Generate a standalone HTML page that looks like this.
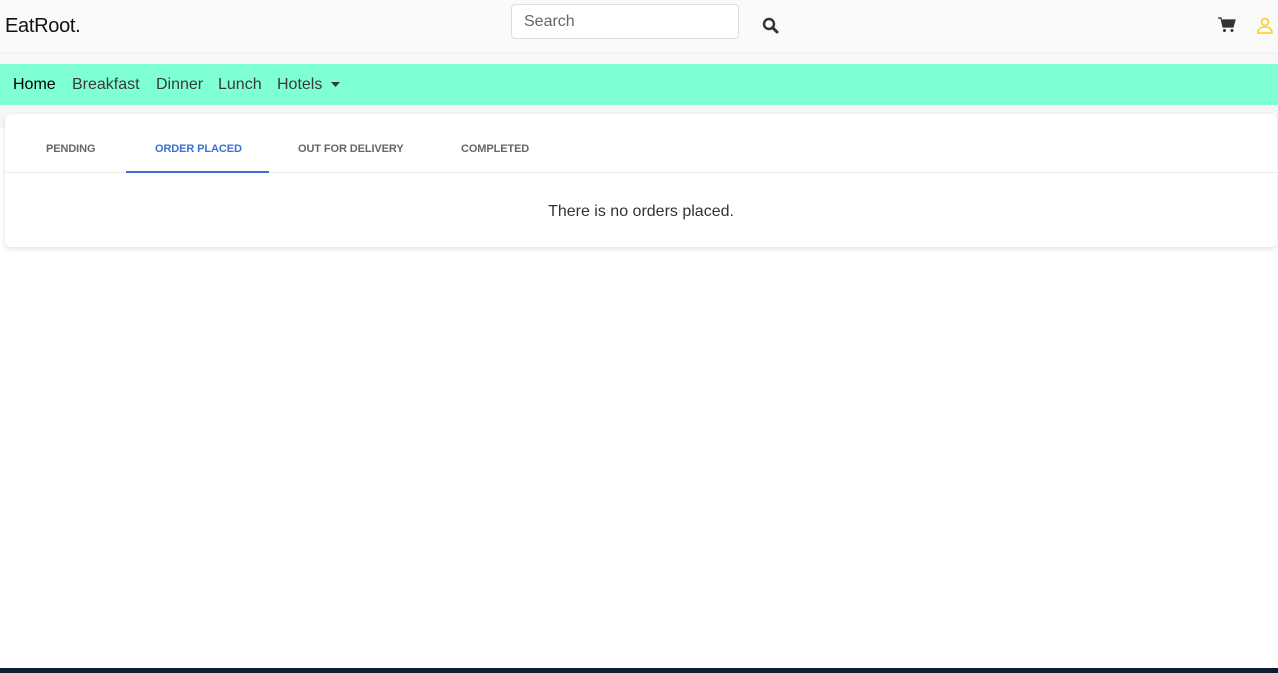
<!DOCTYPE html>
<html><head><meta charset="utf-8"><style>
*{box-sizing:border-box;margin:0;padding:0}
body{width:1278px;height:673px;overflow:hidden;background:#fff;font-family:"Liberation Sans",Roboto,sans-serif;position:relative}
.top{position:absolute;left:0;top:0;width:1278px;height:53px;background:#fafafa;border-bottom:1px solid #f0f0f0}
.logo{position:absolute;left:5px;top:15px;font-size:20px;color:#111;letter-spacing:-0.3px}
.search{position:absolute;left:511px;top:4px;width:228px;height:35px;border:1px solid #ddd;border-radius:4px;background:#fff;font-size:16px;color:#666;padding:8px 12px}
.gap{position:absolute;left:0;top:53px;width:1278px;height:75px;background:#f7f7f7}
.nav{position:absolute;left:0;top:64px;width:1278px;height:41px;background:#7fffd4;font-size:16px;color:#3a3a3a}
.nav span{position:absolute;top:12px}
.card{position:absolute;left:5px;top:114px;width:1272px;height:133px;background:#fff;border-radius:6px;box-shadow:0 2px 6px rgba(0,0,0,.12)}
.tabs{position:absolute;left:0;top:0;width:100%;height:59px;border-bottom:1px solid #eee}
.tab{position:absolute;top:29px;font-size:11px;font-weight:bold;color:#666;letter-spacing:-0.1px}
.ul{position:absolute;left:121px;top:57px;width:143px;height:2px;background:#3b6fd0}
.msg{position:absolute;left:0;width:100%;top:89px;text-align:center;font-size:16px;color:#333}
.foot{position:absolute;left:0;top:668px;width:1278px;height:5px;background:#0b1e33}
</style></head><body>
<div class="gap"></div>
<div class="top">
<div class="logo">EatRoot.</div>
<div class="search">Search</div>
<svg style="position:absolute;left:762px;top:17px" width="17" height="17" viewBox="0 0 17 17"><circle cx="7" cy="7" r="5" fill="none" stroke="#333" stroke-width="2.4"/><line x1="10.5" y1="10.5" x2="15" y2="15" stroke="#333" stroke-width="3" stroke-linecap="round"/></svg>
<svg style="position:absolute;left:1218px;top:17px" width="18" height="16" viewBox="0 0 18 16"><path d="M0 1h3l2 9h10l2-7H4.5" fill="#333" stroke="#333" stroke-width="1.2"/><circle cx="6.5" cy="13.5" r="1.5" fill="#333"/><circle cx="14" cy="13.5" r="1.5" fill="#333"/></svg>
<svg style="position:absolute;left:1256px;top:16px" width="18" height="18" viewBox="0 0 18 18"><circle cx="9" cy="6" r="3.5" fill="none" stroke="#f5d020" stroke-width="1.6"/><path d="M2 17c0-4 3-6 7-6s7 2 7 6z" fill="none" stroke="#f5d020" stroke-width="1.6"/></svg>
</div>
<div class="nav">
<span style="left:13px;color:#000">Home</span>
<span style="left:72px">Breakfast</span>
<span style="left:156px">Dinner</span>
<span style="left:218px">Lunch</span>
<span style="left:277px">Hotels</span>
<svg style="position:absolute;left:331px;top:18px" width="9" height="5"><path d="M0 0h9L4.5 5z" fill="#3a3a3a"/></svg>
</div>
<div class="card">
<div class="tabs">
<div class="tab" style="left:41px">PENDING</div>
<div class="tab" style="left:150px;color:#3b6fd0">ORDER PLACED</div>
<div class="tab" style="left:293px">OUT FOR DELIVERY</div>
<div class="tab" style="left:456px">COMPLETED</div>
<div class="ul"></div>
</div>
<div class="msg">There is no orders placed.</div>
</div>
<div class="foot"></div>
</body></html>
